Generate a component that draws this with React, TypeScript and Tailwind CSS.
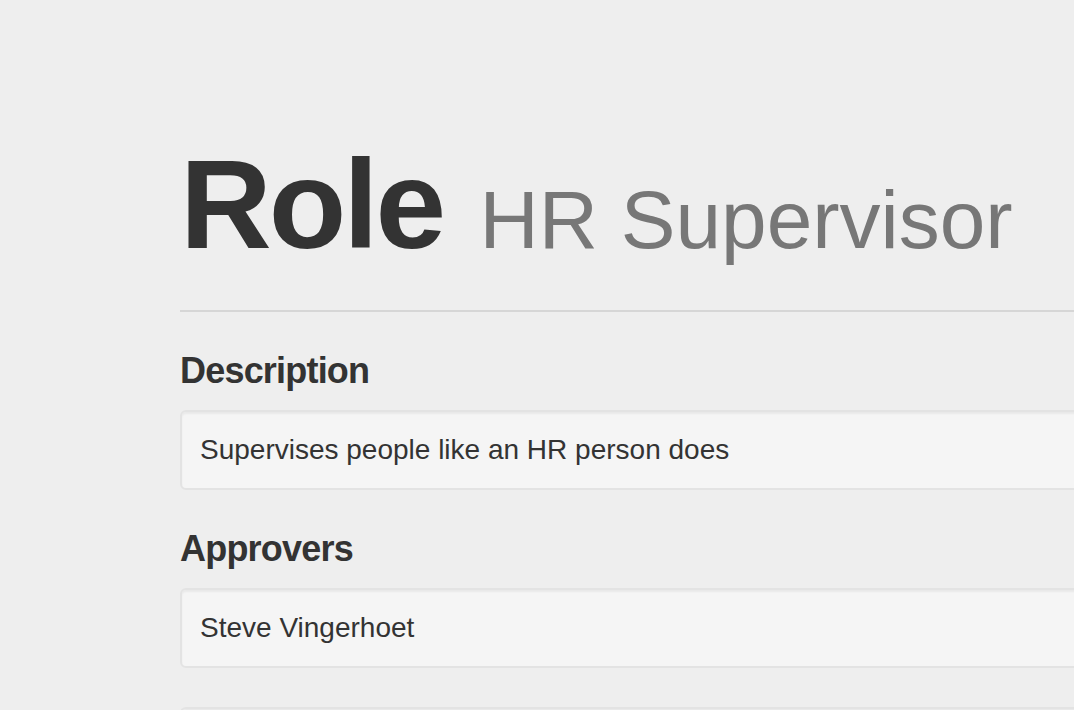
import React from "react";

const font = { fontFamily: '"Liberation Sans", Arial, Helvetica, sans-serif' };

function Well({ children }: { children?: React.ReactNode }) {
  return (
    <div className="rounded-[6px] border-2 border-[#e3e3e3] bg-[#f5f5f5] px-[18px] py-[18px] text-[28px] leading-[40px] text-[#333] shadow-[inset_0_2px_2px_rgba(0,0,0,0.05)] min-h-[80px]">
      {children}
    </div>
  );
}

export default function App() {
  return (
    <div
      className="w-[1074px] h-[710px] overflow-hidden bg-[#eeeeee] text-[#333]"
      style={font}
    >
      <div className="flex flex-col pl-[180px] w-[1400px]">
        <div className="mt-[134px] pb-[36px] border-b-2 border-[#d6d6d6]">
          <h1 className="text-[127px] leading-[140px] font-bold tracking-[-3px] text-[#333] whitespace-nowrap">
            Role{" "}
            <span className="ml-[4px] text-[82px] leading-none font-normal tracking-normal text-[#777]">
              HR Supervisor
            </span>
          </h1>
        </div>
        <h4 className="mt-[39px] mb-[19px] text-[36px] leading-[40px] font-bold tracking-[-0.8px] text-[#333]">
          Description
        </h4>
        <Well>Supervises people like an HR person does</Well>
        <h4 className="mt-[39px] mb-[19px] text-[36px] leading-[40px] font-bold tracking-[-0.8px] text-[#333]">
          Approvers
        </h4>
        <Well>Steve Vingerhoet</Well>
        <div className="mt-[39px]">
          <Well>&nbsp;</Well>
        </div>
      </div>
    </div>
  );
}
